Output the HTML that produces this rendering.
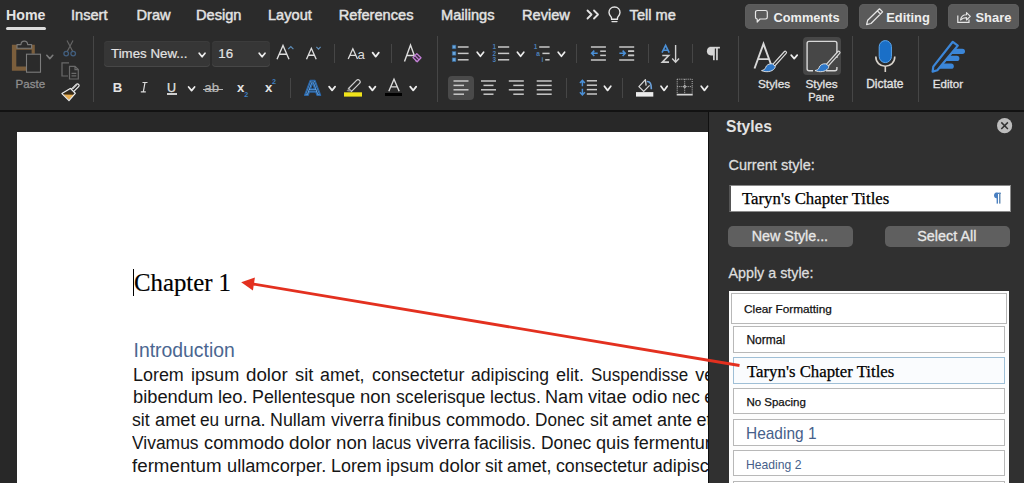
<!DOCTYPE html>
<html><head><meta charset="utf-8"><style>
html,body{margin:0;padding:0;}
body{width:1024px;height:483px;overflow:hidden;position:relative;background:#2b2b2b;font-family:"Liberation Sans",sans-serif;}
.t{position:absolute;white-space:nowrap;line-height:1;}
.r{position:absolute;}
.s{position:absolute;overflow:visible;}
</style></head><body>
<div class="r" style="left:0px;top:0px;width:1024px;height:110px;background:#2b2b2b;"></div>
<div class="r" style="left:0px;top:110px;width:1024px;height:2px;background:#121212;"></div>
<div class="t" style="left:6.00px;top:8.00px;font-size:14.2px;color:#e3e3e3;font-weight:700;font-family:'Liberation Sans', sans-serif;">Home</div>
<div class="t" style="left:71.00px;top:8.00px;font-size:14.6px;color:#e3e3e3;font-weight:400;font-family:'Liberation Sans', sans-serif;-webkit-text-stroke:0.45px #e3e3e3">Insert</div>
<div class="t" style="left:136.50px;top:8.00px;font-size:14.6px;color:#e3e3e3;font-weight:400;font-family:'Liberation Sans', sans-serif;-webkit-text-stroke:0.45px #e3e3e3">Draw</div>
<div class="t" style="left:196.00px;top:8.00px;font-size:14.6px;color:#e3e3e3;font-weight:400;font-family:'Liberation Sans', sans-serif;-webkit-text-stroke:0.45px #e3e3e3">Design</div>
<div class="t" style="left:268.00px;top:8.00px;font-size:14.6px;color:#e3e3e3;font-weight:400;font-family:'Liberation Sans', sans-serif;-webkit-text-stroke:0.45px #e3e3e3">Layout</div>
<div class="t" style="left:338.80px;top:8.00px;font-size:14.6px;color:#e3e3e3;font-weight:400;font-family:'Liberation Sans', sans-serif;-webkit-text-stroke:0.45px #e3e3e3">References</div>
<div class="t" style="left:441.00px;top:8.00px;font-size:14.6px;color:#e3e3e3;font-weight:400;font-family:'Liberation Sans', sans-serif;-webkit-text-stroke:0.45px #e3e3e3">Mailings</div>
<div class="t" style="left:522.00px;top:8.00px;font-size:14.6px;color:#e3e3e3;font-weight:400;font-family:'Liberation Sans', sans-serif;-webkit-text-stroke:0.45px #e3e3e3">Review</div>
<div class="t" style="left:629.60px;top:8.00px;font-size:14.6px;color:#e3e3e3;font-weight:400;font-family:'Liberation Sans', sans-serif;-webkit-text-stroke:0.45px #e3e3e3">Tell me</div>
<div class="r" style="left:6px;top:26.5px;width:40px;height:3.0px;background:#dcdcdc;border-radius:2px"></div>
<div class="r" style="left:745px;top:3.5px;width:103px;height:25.5px;background:#5a5a5a;border-radius:5px;box-shadow:inset 0 0 0 1px #5d5d5d"></div>
<div class="r" style="left:859px;top:3.5px;width:78px;height:25.5px;background:#5a5a5a;border-radius:5px;box-shadow:inset 0 0 0 1px #5d5d5d"></div>
<div class="r" style="left:948px;top:3.5px;width:71px;height:25.5px;background:#5a5a5a;border-radius:5px;box-shadow:inset 0 0 0 1px #5d5d5d"></div>
<div class="t" style="left:773.50px;top:11.80px;font-size:12.8px;color:#eeeeee;font-weight:700;font-family:'Liberation Sans', sans-serif;">Comments</div>
<div class="t" style="left:886.20px;top:11.80px;font-size:12.9px;color:#eeeeee;font-weight:700;font-family:'Liberation Sans', sans-serif;">Editing</div>
<div class="t" style="left:975.50px;top:11.80px;font-size:12.9px;color:#eeeeee;font-weight:700;font-family:'Liberation Sans', sans-serif;">Share</div>
<div class="r" style="left:93px;top:36px;width:1px;height:66px;background:#464646;"></div>
<div class="r" style="left:437px;top:36px;width:1px;height:66px;background:#464646;"></div>
<div class="r" style="left:738px;top:36px;width:1px;height:66px;background:#464646;"></div>
<div class="r" style="left:852px;top:36px;width:1px;height:66px;background:#464646;"></div>
<div class="r" style="left:918px;top:36px;width:1px;height:66px;background:#464646;"></div>
<div class="r" style="left:334px;top:44px;width:1px;height:19px;background:#464646;"></div>
<div class="r" style="left:391px;top:44px;width:1px;height:19px;background:#464646;"></div>
<div class="r" style="left:290px;top:78px;width:1px;height:20px;background:#464646;"></div>
<div class="r" style="left:576px;top:44px;width:1px;height:19px;background:#464646;"></div>
<div class="r" style="left:648px;top:44px;width:1px;height:19px;background:#464646;"></div>
<div class="r" style="left:692px;top:44px;width:1px;height:19px;background:#464646;"></div>
<div class="r" style="left:566px;top:78px;width:1px;height:20px;background:#464646;"></div>
<div class="r" style="left:622px;top:78px;width:1px;height:20px;background:#464646;"></div>
<div class="t" style="left:15.50px;top:78.20px;font-size:11.6px;color:#8e8e8e;font-weight:400;font-family:'Liberation Sans', sans-serif;-webkit-text-stroke:0.3px #8e8e8e">Paste</div>
<div class="r" style="left:104px;top:41px;width:106px;height:26px;background:#363636;border-radius:4px;box-shadow:inset 0 -1px 0 #474747, inset 0 1px 0 #3c3c3c"></div>
<div class="r" style="left:212px;top:41px;width:58px;height:26px;background:#363636;border-radius:4px;box-shadow:inset 0 -1px 0 #474747, inset 0 1px 0 #3c3c3c"></div>
<div class="t" style="left:111.00px;top:47.20px;font-size:13.3px;color:#e3e3e3;font-weight:400;font-family:'Liberation Sans', sans-serif;-webkit-text-stroke:0.2px #e3e3e3">Times New...</div>
<div class="t" style="left:218.30px;top:47.20px;font-size:13.3px;color:#e3e3e3;font-weight:400;font-family:'Liberation Sans', sans-serif;-webkit-text-stroke:0.2px #e3e3e3">16</div>
<div class="t" style="left:357.60px;top:48.10px;font-size:13.2px;color:#dcdcdc;font-weight:400;font-family:'Liberation Sans', sans-serif;">a</div>
<div class="t" style="left:112.80px;top:80.90px;font-size:13.2px;color:#e3e3e3;font-weight:700;font-family:'Liberation Sans', sans-serif;">B</div>
<div class="t" style="left:167.00px;top:81.60px;font-size:12.5px;color:#e3e3e3;font-weight:400;font-family:'Liberation Sans', sans-serif;-webkit-text-stroke:0.25px #e3e3e3">U</div>
<div class="r" style="left:167px;top:93px;width:10px;height:1.5999999999999943px;background:#cfcfcf;"></div>
<div class="t" style="left:204.30px;top:80.90px;font-size:13.2px;color:#b8b8b8;font-weight:400;font-family:'Liberation Sans', sans-serif;-webkit-text-stroke:0.2px #b8b8b8">ab</div>
<div class="r" style="left:202.8px;top:88.6px;width:20.0px;height:1.2000000000000028px;background:#b8b8b8;"></div>
<div class="t" style="left:237.00px;top:80.90px;font-size:13.2px;color:#e3e3e3;font-weight:700;font-family:'Liberation Sans', sans-serif;">x</div>
<div class="t" style="left:244.30px;top:90.80px;font-size:7.2px;color:#3f7fc0;font-weight:700;font-family:'Liberation Sans', sans-serif;">2</div>
<div class="t" style="left:265.00px;top:80.90px;font-size:13.2px;color:#e3e3e3;font-weight:700;font-family:'Liberation Sans', sans-serif;">x</div>
<div class="t" style="left:272.00px;top:77.70px;font-size:7.2px;color:#3f7fc0;font-weight:700;font-family:'Liberation Sans', sans-serif;">2</div>
<div class="r" style="left:385px;top:92.7px;width:17px;height:3.5999999999999943px;background:#000000;"></div>
<div class="t" style="left:492.60px;top:44.40px;font-size:6.4px;color:#4b7fb9;font-weight:700;font-family:'Liberation Sans', sans-serif;">1</div>
<div class="t" style="left:492.60px;top:50.80px;font-size:6.4px;color:#4b7fb9;font-weight:700;font-family:'Liberation Sans', sans-serif;">2</div>
<div class="t" style="left:492.60px;top:57.20px;font-size:6.4px;color:#4b7fb9;font-weight:700;font-family:'Liberation Sans', sans-serif;">3</div>
<div class="t" style="left:533.80px;top:44.40px;font-size:6.4px;color:#4b7fb9;font-weight:700;font-family:'Liberation Sans', sans-serif;">1</div>
<div class="t" style="left:536.30px;top:50.80px;font-size:6.6px;color:#4b7fb9;font-weight:700;font-family:'Liberation Sans', sans-serif;">a</div>
<div class="t" style="left:541.50px;top:57.00px;font-size:6.4px;color:#4b7fb9;font-weight:700;font-family:'Liberation Sans', sans-serif;">i</div>
<div class="r" style="left:448px;top:76px;width:25.5px;height:24.299999999999997px;background:#4a4a4a;border-radius:4px"></div>
<div class="t" style="left:758.00px;top:79.40px;font-size:11.8px;color:#e3e3e3;font-weight:400;font-family:'Liberation Sans', sans-serif;-webkit-text-stroke:0.3px #e3e3e3">Styles</div>
<div class="r" style="left:803px;top:37px;width:38px;height:38px;background:#474747;border-radius:4px"></div>
<div class="t" style="left:805.50px;top:79.40px;font-size:11.8px;color:#e3e3e3;font-weight:400;font-family:'Liberation Sans', sans-serif;-webkit-text-stroke:0.3px #e3e3e3">Styles</div>
<div class="t" style="left:808.20px;top:91.70px;font-size:11.1px;color:#e3e3e3;font-weight:400;font-family:'Liberation Sans', sans-serif;-webkit-text-stroke:0.3px #e3e3e3">Pane</div>
<div class="t" style="left:866.20px;top:78.40px;font-size:12px;color:#e3e3e3;font-weight:400;font-family:'Liberation Sans', sans-serif;-webkit-text-stroke:0.3px #e3e3e3">Dictate</div>
<div class="t" style="left:932.80px;top:78.40px;font-size:11.6px;color:#e3e3e3;font-weight:400;font-family:'Liberation Sans', sans-serif;-webkit-text-stroke:0.3px #e3e3e3">Editor</div>
<svg class="s" style="left:0;top:0;z-index:2" width="1024" height="112" viewBox="0 0 1024 112"><polyline points="587.5,10.5 591.5,14.5 587.5,18.5" fill="none" stroke="#e3e3e3" stroke-width="1.8" stroke-linecap="round" stroke-linejoin="round"/><polyline points="594,10.5 598,14.5 594,18.5" fill="none" stroke="#e3e3e3" stroke-width="1.8" stroke-linecap="round" stroke-linejoin="round"/><path d="M614.5 7 C611 7 609 9.6 609 12.5 C609 14.8 610.3 16 611.4 17.3 L611.6 19.2 L617.4 19.2 L617.6 17.3 C618.7 16 620 14.8 620 12.5 C620 9.6 618 7 614.5 7 Z" fill="none" stroke="#e3e3e3" stroke-width="1.4"/><line x1="612" y1="21.6" x2="617" y2="21.6" stroke="#e3e3e3" stroke-width="1.4" stroke-linecap="round"/><path d="M757.5 10.5 H765.5 Q767.3 10.5 767.3 12.3 V17.3 Q767.3 19 765.5 19 H760 L757.2 22 V19 Q755.5 19 755.5 17.3 V12.3 Q755.5 10.5 757.5 10.5 Z" fill="none" stroke="#e6e6e6" stroke-width="1.2" stroke-linejoin="round"/><path d="M879.5 8.8 L882.6 11.9 L871 23.5 L866.6 24.6 L867.7 20.2 Z M877.4 10.9 L880.5 14" fill="none" stroke="#e6e6e6" stroke-width="1.25" stroke-linejoin="round"/><path d="M957.8 15.5 V22.3 H969 V19.5" fill="none" stroke="#e6e6e6" stroke-width="1.2"/><path d="M960.5 20 C961 16.3 963.5 14.8 966.5 14.8 V12.6 L970.3 16.3 L966.5 20 V17.6 C964.2 17.6 962.2 18.3 960.5 20 Z" fill="none" stroke="#e6e6e6" stroke-width="1.15" stroke-linejoin="round"/><path d="M11.9 44.7 H34.8 V53.7 H31.6 V49.8 H16.3 V66.5 H26 V70.7 H11.9 Z" fill="#7b5e3c"/><path d="M17 48.2 V44.6 H21 C21 42.5 22.5 41.1 24.3 41.1 C26.1 41.1 27.6 42.5 27.6 44.6 H31.6 V48.2 Z" fill="#2b2b2b" stroke="#7a7a7a" stroke-width="1.1" stroke-linejoin="round"/><rect x="26.5" y="54.2" width="14" height="18" fill="#2b2b2b" stroke="#7c7c7c" stroke-width="1.1"/><polyline points="46.8,55.3 49.8,58.6 52.8,55.3" fill="none" stroke="#7a7a7a" stroke-width="1.6" stroke-linecap="round" stroke-linejoin="round"/><path d="M67 40.5 L72.8 51.5 M73 40.5 L67.2 51.5" fill="none" stroke="#646464" stroke-width="1.2"/><circle cx="66.2" cy="53.6" r="2.3" fill="none" stroke="#415e7e" stroke-width="1.3"/><circle cx="73.2" cy="53.6" r="2.3" fill="none" stroke="#415e7e" stroke-width="1.3"/><path d="M69 62.8 H62 V76 H68" fill="none" stroke="#6a6a6a" stroke-width="1.2"/><path d="M69.5 66.3 H75 L78.3 69.6 V79 H69.5 Z M75 66.3 V69.6 H78.3 M71.5 73.3 H76.3 M71.5 75.8 H76.3" fill="none" stroke="#6a6a6a" stroke-width="1.2"/><path d="M63.2 94.2 L74.2 94.6 L69 100.3 Z" fill="#e6ad52"/><path d="M66 92 L72.5 92.3 L74.2 94.6 L63.2 94.2 Z" fill="#3a2a12"/><path d="M61.9 93.6 L70.3 88.4 L75.3 93.3 L69 100.7 Z" fill="none" stroke="#eeeeee" stroke-width="1.2" stroke-linejoin="round"/><path d="M71.2 89.3 L76.2 84.3 C76.9 83.6 77.9 83.6 78.6 84.3 C79.3 85 79.3 86 78.6 86.7 L73.6 91.7" fill="none" stroke="#eeeeee" stroke-width="1.2" stroke-linejoin="round"/><path d="M72.8 89.2 L77.3 84.8" stroke="#eeeeee" stroke-width="0.7"/><polyline points="199.2,53.2 202.1,56.8 205,53.2" fill="none" stroke="#ececec" stroke-width="1.75" stroke-linecap="round" stroke-linejoin="round"/><polyline points="259.2,53.2 262.1,56.8 265,53.2" fill="none" stroke="#ececec" stroke-width="1.75" stroke-linecap="round" stroke-linejoin="round"/><path d="M277,59.2 L283.0,45.4 L289,59.2 M279.16,54.232 H286.84" fill="none" stroke="#dedede" stroke-width="1.35" stroke-linejoin="miter"/><polyline points="288.2,49.2 290.8,46.6 293.4,49.2" fill="none" stroke="#5e8db8" stroke-width="1.2"/><path d="M306.5,59.2 L311.35,48.3 L316.2,59.2 M308.246,55.276 H314.454" fill="none" stroke="#dedede" stroke-width="1.35" stroke-linejoin="miter"/><polyline points="316.4,46.8 318.5,49.1 320.6,46.8" fill="none" stroke="#5e8db8" stroke-width="1.2"/><path d="M348.2,59.1 L352.85,48.8 L357.5,59.1 M349.874,55.392 H355.82599999999996" fill="none" stroke="#dcdcdc" stroke-width="1.3" stroke-linejoin="miter"/><polyline points="372.6,52.6 375.70000000000005,56.6 378.8,52.6" fill="none" stroke="#ececec" stroke-width="1.75" stroke-linecap="round" stroke-linejoin="round"/><path d="M404.5,61.5 L410.5,45 L416.5,61.5 M406.66,55.56 H414.34" fill="none" stroke="#dcdcdc" stroke-width="1.4" stroke-linejoin="miter"/><path d="M416.8 53.6 L421 57.8 L417.2 61.8 L413 57.6 Z" fill="#3a2d40" stroke="#c47fd8" stroke-width="1.3" stroke-linejoin="round"/><path d="M415 55.6 L419.1 59.8" stroke="#c47fd8" stroke-width="1.2"/><path d="M142.5 82.5 H147.5 M140.8 91.9 H145.8 M145 82.5 L143.3 91.9" fill="none" stroke="#dcdcdc" stroke-width="1.2"/><polyline points="188.6,87 191.6,90.6 194.6,87" fill="none" stroke="#ececec" stroke-width="1.75" stroke-linecap="round" stroke-linejoin="round"/><path d="M304.6 95.3 L310.2 80.4 H315 L320.6 95.3 H317 L315.8 92 H309.4 L308.2 95.3 Z M310.4 88.9 H314.8 L312.6 83 Z" fill="#6aa8e4" fill-rule="evenodd" stroke="#2a66a8" stroke-width="1.3" stroke-linejoin="round"/><path d="M306.6 94.2 L311.2 81.8 H314 L318.6 94.2 M309.2 90.6 H316" fill="none" stroke="#173a60" stroke-width="0.9" stroke-linejoin="round"/><polyline points="329.1,86.6 332.1,90.4 335.1,86.6" fill="none" stroke="#ececec" stroke-width="1.75" stroke-linecap="round" stroke-linejoin="round"/><path d="M348.5 88.5 L356.5 80.3 C357.4 79.4 358.6 79.4 359.5 80.3 C360.4 81.2 360.4 82.4 359.5 83.3 L351.5 91.3 Z" fill="none" stroke="#cfcfcf" stroke-width="1.2"/><path d="M348.5 88.5 L346.5 91 L349 91.6 L351.5 91.3 Z" fill="#8a8a8a"/><rect x="344" y="92.3" width="18" height="4.3" fill="#f0e31a"/><polyline points="369.4,86.6 372.4,90.4 375.4,86.6" fill="none" stroke="#ececec" stroke-width="1.75" stroke-linecap="round" stroke-linejoin="round"/><path d="M388.8,91.2 L394.0,79.2 L399.2,91.2 M390.672,86.88 H397.328" fill="none" stroke="#dcdcdc" stroke-width="1.35" stroke-linejoin="miter"/><polyline points="410.2,86.6 413.2,90.4 416.2,86.6" fill="none" stroke="#ececec" stroke-width="1.75" stroke-linecap="round" stroke-linejoin="round"/><rect x="452.2" y="45.1" width="3.7" height="3.7" fill="#69a6dc" stroke="#2f5f90" stroke-width="0.6"/><line x1="457.8" y1="47" x2="468.6" y2="47" stroke="#c9c9c9" stroke-width="1.5"/><rect x="452.2" y="51.5" width="3.7" height="3.7" fill="#69a6dc" stroke="#2f5f90" stroke-width="0.6"/><line x1="457.8" y1="53.4" x2="468.6" y2="53.4" stroke="#c9c9c9" stroke-width="1.5"/><rect x="452.2" y="57.9" width="3.7" height="3.7" fill="#69a6dc" stroke="#2f5f90" stroke-width="0.6"/><line x1="457.8" y1="59.8" x2="468.6" y2="59.8" stroke="#c9c9c9" stroke-width="1.5"/><polyline points="477.2,52.3 480.4,56.2 483.6,52.3" fill="none" stroke="#ececec" stroke-width="1.75" stroke-linecap="round" stroke-linejoin="round"/><line x1="498" y1="47" x2="509.2" y2="47" stroke="#c9c9c9" stroke-width="1.5"/><line x1="498" y1="53.4" x2="509.2" y2="53.4" stroke="#c9c9c9" stroke-width="1.5"/><line x1="498" y1="59.8" x2="509.2" y2="59.8" stroke="#c9c9c9" stroke-width="1.5"/><polyline points="517.4,52.3 520.5999999999999,56.2 523.8,52.3" fill="none" stroke="#ececec" stroke-width="1.75" stroke-linecap="round" stroke-linejoin="round"/><line x1="539.2" y1="47" x2="549.6" y2="47" stroke="#c9c9c9" stroke-width="1.5"/><line x1="542.4" y1="53.4" x2="549.6" y2="53.4" stroke="#c9c9c9" stroke-width="1.5"/><line x1="545.2" y1="59.8" x2="549.6" y2="59.8" stroke="#c9c9c9" stroke-width="1.5"/><polyline points="558.2,52.3 561.4000000000001,56.2 564.6,52.3" fill="none" stroke="#ececec" stroke-width="1.75" stroke-linecap="round" stroke-linejoin="round"/><line x1="590.9" y1="47" x2="605.9" y2="47" stroke="#c9c9c9" stroke-width="1.5"/><line x1="590.9" y1="60" x2="605.9" y2="60" stroke="#c9c9c9" stroke-width="1.5"/><line x1="600.1999999999999" y1="51.2" x2="605.9" y2="51.2" stroke="#c9c9c9" stroke-width="1.5"/><line x1="600.1999999999999" y1="55.4" x2="605.9" y2="55.4" stroke="#c9c9c9" stroke-width="1.5"/><line x1="619.2" y1="47" x2="634.2" y2="47" stroke="#c9c9c9" stroke-width="1.5"/><line x1="619.2" y1="60" x2="634.2" y2="60" stroke="#c9c9c9" stroke-width="1.5"/><line x1="628.5" y1="51.2" x2="634.2" y2="51.2" stroke="#c9c9c9" stroke-width="1.5"/><line x1="628.5" y1="55.4" x2="634.2" y2="55.4" stroke="#c9c9c9" stroke-width="1.5"/><path d="M597.7 53.3 H591.8 M594.3 50.6 L591.6 53.3 L594.3 56" fill="none" stroke="#4a8fd6" stroke-width="1.5"/><path d="M619.4 53.3 H625.2 M622.6 50.6 L625.3 53.3 L622.6 56" fill="none" stroke="#4a8fd6" stroke-width="1.5"/><line x1="628" y1="51.2" x2="633.8" y2="51.2" stroke="#c9c9c9" stroke-width="1.5"/><line x1="628" y1="55.4" x2="633.8" y2="55.4" stroke="#c9c9c9" stroke-width="1.5"/><path d="M662 52.7 L665.6 45.4 L669.2 52.7 M663.3 50.2 H667.9" fill="none" stroke="#4a8fd6" stroke-width="1.6"/><path d="M662.3 55.5 H668.7 L662.3 62.1 H669" fill="none" stroke="#d0d0d0" stroke-width="1.6"/><path d="M675.6 45 V62 M672.2 58.6 L675.6 62.2 L679 58.6" fill="none" stroke="#d0d0d0" stroke-width="1.4"/><path d="M714.4 47.2 H709.8 C707.9 47.2 706.9 49.2 706.9 51.3 C706.9 53.5 708.2 55.4 711 55.4 H714.4 Z" fill="#d6d6d6"/><rect x="709.5" y="46.8" width="10.4" height="1.7" fill="#d6d6d6"/><rect x="713" y="47" width="1.7" height="13.2" fill="#d6d6d6"/><rect x="716.1" y="47" width="1.7" height="13.2" fill="#d6d6d6"/><line x1="453.5" y1="81" x2="468.5" y2="81" stroke="#c9c9c9" stroke-width="1.5"/><line x1="453.5" y1="85.4" x2="464.0" y2="85.4" stroke="#c9c9c9" stroke-width="1.5"/><line x1="453.5" y1="89.8" x2="468.5" y2="89.8" stroke="#c9c9c9" stroke-width="1.5"/><line x1="453.5" y1="94.2" x2="464.0" y2="94.2" stroke="#c9c9c9" stroke-width="1.5"/><line x1="481.0" y1="81" x2="496.0" y2="81" stroke="#c9c9c9" stroke-width="1.5"/><line x1="483.5" y1="85.4" x2="493.5" y2="85.4" stroke="#c9c9c9" stroke-width="1.5"/><line x1="481.0" y1="89.8" x2="496.0" y2="89.8" stroke="#c9c9c9" stroke-width="1.5"/><line x1="483.5" y1="94.2" x2="493.5" y2="94.2" stroke="#c9c9c9" stroke-width="1.5"/><line x1="508.79999999999995" y1="81" x2="523.8" y2="81" stroke="#c9c9c9" stroke-width="1.5"/><line x1="513.3" y1="85.4" x2="523.8" y2="85.4" stroke="#c9c9c9" stroke-width="1.5"/><line x1="508.79999999999995" y1="89.8" x2="523.8" y2="89.8" stroke="#c9c9c9" stroke-width="1.5"/><line x1="513.3" y1="94.2" x2="523.8" y2="94.2" stroke="#c9c9c9" stroke-width="1.5"/><line x1="536.7" y1="81" x2="551.7" y2="81" stroke="#c9c9c9" stroke-width="1.5"/><line x1="536.7" y1="85.4" x2="551.7" y2="85.4" stroke="#c9c9c9" stroke-width="1.5"/><line x1="536.7" y1="89.8" x2="551.7" y2="89.8" stroke="#c9c9c9" stroke-width="1.5"/><line x1="536.7" y1="94.2" x2="551.7" y2="94.2" stroke="#c9c9c9" stroke-width="1.5"/><path d="M582.4 80.5 V86.3 M579.9 83 L582.4 80.4 L584.9 83 M582.4 88.8 V94.8 M579.9 92.3 L582.4 94.9 L584.9 92.3" fill="none" stroke="#4a8fd6" stroke-width="1.5"/><line x1="586.8" y1="80.8" x2="597" y2="80.8" stroke="#c9c9c9" stroke-width="1.5"/><line x1="586.8" y1="85.2" x2="597" y2="85.2" stroke="#c9c9c9" stroke-width="1.5"/><line x1="586.8" y1="89.6" x2="597" y2="89.6" stroke="#c9c9c9" stroke-width="1.5"/><line x1="586.8" y1="94" x2="597" y2="94" stroke="#c9c9c9" stroke-width="1.5"/><polyline points="604.4,86.2 607.5999999999999,90.4 610.8,86.2" fill="none" stroke="#ececec" stroke-width="1.75" stroke-linecap="round" stroke-linejoin="round"/><path d="M646.1 85.6 L645.4 79.6 L638.9 86.6 L643.7 91.4 L649.6 85.4" fill="none" stroke="#d6d6d6" stroke-width="1.3" stroke-linejoin="round"/><path d="M647.5 81.5 C649.5 81.5 651.3 83.5 651.3 88.5" fill="none" stroke="#6a9fd8" stroke-width="1.7" stroke-linecap="round"/><rect x="636" y="92.1" width="17.3" height="4.5" fill="#ececec"/><polyline points="661,86.2 664.1,90.4 667.2,86.2" fill="none" stroke="#ececec" stroke-width="1.75" stroke-linecap="round" stroke-linejoin="round"/><path d="M677.2 79.2 H692.2 V94 M677.2 79.2 V94 M684.7 79.2 V94 M677.2 86.6 H692.2" fill="none" stroke="#bdbdbd" stroke-width="1" stroke-dasharray="1 1.1"/><rect x="676.7" y="93.8" width="16" height="1.7" fill="#d6d6d6"/><circle cx="684.7" cy="86.6" r="1.1" fill="none" stroke="#d6d6d6" stroke-width="0.8"/><polyline points="701.2,86.2 704.4000000000001,90.4 707.6,86.2" fill="none" stroke="#ececec" stroke-width="1.75" stroke-linecap="round" stroke-linejoin="round"/><path d="M754.5,68.5 L763.5,43.8 L772.5,68.5 M757.92,59.114 H769.08" fill="none" stroke="#d8d8d8" stroke-width="1.9" stroke-linejoin="miter"/><line x1="773.3" y1="65.8" x2="785.2" y2="52.6" stroke="#dadada" stroke-width="3.8" stroke-linecap="round"/><line x1="773.6" y1="65.4" x2="785.2" y2="52.6" stroke="#2b2b2b" stroke-width="1.4" stroke-linecap="round"/><path d="M772.4 63.8 C769 63.3 766 65.3 765.5 67.8 C765 69.3 763.5 70.1 761.5 70.6 C766 72.5 772 72 774.6 68.4 C775.3 67.4 775.4 66.3 775 65.9 Z" fill="#2f78c8" stroke="#e6e6e6" stroke-width="0.9" stroke-linejoin="round"/><polyline points="791.2,55.2 794.2,58.6 797.2,55.2" fill="none" stroke="#ececec" stroke-width="1.75" stroke-linecap="round" stroke-linejoin="round"/><path d="M836.9 58 V43.4 Q836.9 41.4 834.9 41.4 H809.1 Q807.1 41.4 807.1 43.4 V68.7 Q807.1 70.7 809.1 70.7 H813 M826 70.7 H834.9 Q836.9 70.7 836.9 68.7 V67" fill="none" stroke="#d8d8d8" stroke-width="1.4"/><line x1="826.8" y1="65.8" x2="838.7" y2="52.6" stroke="#dadada" stroke-width="3.8" stroke-linecap="round"/><line x1="827.1" y1="65.4" x2="838.7" y2="52.6" stroke="#474747" stroke-width="1.4" stroke-linecap="round"/><path d="M825.9 63.8 C822.5 63.3 819.5 65.3 819.0 67.8 C818.5 69.3 817.0 70.1 815.0 70.6 C819.5 72.5 825.5 72 828.1 68.4 C828.8 67.4 828.9 66.3 828.5 65.9 Z" fill="#2f78c8" stroke="#e6e6e6" stroke-width="0.9" stroke-linejoin="round"/><rect x="879.2" y="40.6" width="12.2" height="22" rx="6.1" fill="#1a6fc7" stroke="#5aa6ee" stroke-width="1"/><path d="M875.8 56.5 C875.8 62.5 880 66.3 885.3 66.3 C890.6 66.3 894.8 62.5 894.8 56.5" fill="none" stroke="#d8d2cb" stroke-width="1.6"/><path d="M885.3 66.3 V72" stroke="#d8d2cb" stroke-width="1.6"/><path d="M946 51.3 H963 C964.5 51.3 965 50.5 965 51.3 C965 52.8 964.5 53.8 963 53.8 Z" fill="none"/><rect x="946.5" y="48.7" width="18.5" height="5.2" rx="2.6" fill="#3b86d8"/><rect x="940" y="55.8" width="19.4" height="5.2" rx="2.6" fill="#3b86d8"/><rect x="934.5" y="63.6" width="19.3" height="5.2" rx="2.6" fill="#3b86d8"/><path d="M952.8 41.8 L957.8 45.6 L937.3 70.2 L932.6 71.6 L933.3 66.6 Z" fill="#2b2b2b" stroke="#3b86d8" stroke-width="2.2" stroke-linejoin="round"/></svg>
<div class="r" style="left:0px;top:112px;width:708px;height:371px;background:#282828;"></div>
<div class="r" style="left:17px;top:132px;width:691px;height:351px;background:#ffffff;"></div>
<div class="r" style="left:133px;top:268.5px;width:1.3000000000000114px;height:27.5px;background:#000;"></div>
<div class="t" style="left:133.60px;top:269.50px;font-size:26.2px;color:#000;font-weight:400;font-family:'Liberation Serif', serif;-webkit-text-stroke:0.2px #000;transform:scaleX(0.9459);transform-origin:0 0;">Chapter 1</div>
<div class="t" style="left:133.50px;top:341.00px;font-size:19.4px;color:#4a6690;font-weight:400;font-family:'Liberation Sans', sans-serif;">Introduction</div>
<div class="t" style="left:132.90px;top:365.50px;font-size:18px;color:#161616;font-weight:400;font-family:'Liberation Sans', sans-serif;transform:scaleX(0.995);transform-origin:0 0;">Lorem</div>
<div class="t" style="left:190.70px;top:365.50px;font-size:18px;color:#161616;font-weight:400;font-family:'Liberation Sans', sans-serif;transform:scaleX(1.004);transform-origin:0 0;">ipsum</div>
<div class="t" style="left:245.90px;top:365.50px;font-size:18px;color:#161616;font-weight:400;font-family:'Liberation Sans', sans-serif;transform:scaleX(1.042);transform-origin:0 0;">dolor</div>
<div class="t" style="left:294.60px;top:365.50px;font-size:18px;color:#161616;font-weight:400;font-family:'Liberation Sans', sans-serif;transform:scaleX(1.017);transform-origin:0 0;">sit</div>
<div class="t" style="left:319.90px;top:365.50px;font-size:18px;color:#161616;font-weight:400;font-family:'Liberation Sans', sans-serif;transform:scaleX(0.990);transform-origin:0 0;">amet,</div>
<div class="t" style="left:371.50px;top:365.50px;font-size:18px;color:#161616;font-weight:400;font-family:'Liberation Sans', sans-serif;transform:scaleX(0.993);transform-origin:0 0;">consectetur</div>
<div class="t" style="left:470.90px;top:365.50px;font-size:18px;color:#161616;font-weight:400;font-family:'Liberation Sans', sans-serif;transform:scaleX(0.974);transform-origin:0 0;">adipiscing</div>
<div class="t" style="left:555.90px;top:365.50px;font-size:18px;color:#161616;font-weight:400;font-family:'Liberation Sans', sans-serif;transform:scaleX(1.003);transform-origin:0 0;">elit.</div>
<div class="t" style="left:591.00px;top:365.50px;font-size:18px;color:#161616;font-weight:400;font-family:'Liberation Sans', sans-serif;transform:scaleX(0.943);transform-origin:0 0;">Suspendisse</div>
<div class="t" style="left:695.25px;top:365.50px;font-size:18px;color:#161616;font-weight:400;font-family:'Liberation Sans', sans-serif;">vel</div>
<div class="t" style="left:133.00px;top:388.00px;font-size:18px;color:#161616;font-weight:400;font-family:'Liberation Sans', sans-serif;transform:scaleX(1.016);transform-origin:0 0;">bibendum</div>
<div class="t" style="left:218.00px;top:388.00px;font-size:18px;color:#161616;font-weight:400;font-family:'Liberation Sans', sans-serif;transform:scaleX(1.023);transform-origin:0 0;">leo.</div>
<div class="t" style="left:252.40px;top:388.00px;font-size:18px;color:#161616;font-weight:400;font-family:'Liberation Sans', sans-serif;transform:scaleX(0.991);transform-origin:0 0;">Pellentesque</div>
<div class="t" style="left:360.30px;top:388.00px;font-size:18px;color:#161616;font-weight:400;font-family:'Liberation Sans', sans-serif;transform:scaleX(1.028);transform-origin:0 0;">non</div>
<div class="t" style="left:395.90px;top:388.00px;font-size:18px;color:#161616;font-weight:400;font-family:'Liberation Sans', sans-serif;transform:scaleX(0.981);transform-origin:0 0;">scelerisque</div>
<div class="t" style="left:489.90px;top:388.00px;font-size:18px;color:#161616;font-weight:400;font-family:'Liberation Sans', sans-serif;transform:scaleX(0.976);transform-origin:0 0;">lectus.</div>
<div class="t" style="left:545.40px;top:388.00px;font-size:18px;color:#161616;font-weight:400;font-family:'Liberation Sans', sans-serif;transform:scaleX(1.007);transform-origin:0 0;">Nam</div>
<div class="t" style="left:588.40px;top:388.00px;font-size:18px;color:#161616;font-weight:400;font-family:'Liberation Sans', sans-serif;transform:scaleX(1.015);transform-origin:0 0;">vitae</div>
<div class="t" style="left:631.70px;top:388.00px;font-size:18px;color:#161616;font-weight:400;font-family:'Liberation Sans', sans-serif;transform:scaleX(1.040);transform-origin:0 0;">odio</div>
<div class="t" style="left:671.80px;top:388.00px;font-size:18px;color:#161616;font-weight:400;font-family:'Liberation Sans', sans-serif;transform:scaleX(0.958);transform-origin:0 0;">nec</div>
<div class="t" style="left:704.30px;top:388.00px;font-size:18px;color:#161616;font-weight:400;font-family:'Liberation Sans', sans-serif;">eros</div>
<div class="t" style="left:132.40px;top:411.00px;font-size:18px;color:#161616;font-weight:400;font-family:'Liberation Sans', sans-serif;transform:scaleX(0.983);transform-origin:0 0;">sit</div>
<div class="t" style="left:154.80px;top:411.00px;font-size:18px;color:#161616;font-weight:400;font-family:'Liberation Sans', sans-serif;transform:scaleX(1.014);transform-origin:0 0;">amet</div>
<div class="t" style="left:200.10px;top:411.00px;font-size:18px;color:#161616;font-weight:400;font-family:'Liberation Sans', sans-serif;transform:scaleX(0.959);transform-origin:0 0;">eu</div>
<div class="t" style="left:224.00px;top:411.00px;font-size:18px;color:#161616;font-weight:400;font-family:'Liberation Sans', sans-serif;transform:scaleX(1.016);transform-origin:0 0;">urna.</div>
<div class="t" style="left:270.40px;top:411.00px;font-size:18px;color:#161616;font-weight:400;font-family:'Liberation Sans', sans-serif;transform:scaleX(0.991);transform-origin:0 0;">Nullam</div>
<div class="t" style="left:330.60px;top:411.00px;font-size:18px;color:#161616;font-weight:400;font-family:'Liberation Sans', sans-serif;transform:scaleX(0.983);transform-origin:0 0;">viverra</div>
<div class="t" style="left:388.40px;top:411.00px;font-size:18px;color:#161616;font-weight:400;font-family:'Liberation Sans', sans-serif;transform:scaleX(1.015);transform-origin:0 0;">finibus</div>
<div class="t" style="left:445.90px;top:411.00px;font-size:18px;color:#161616;font-weight:400;font-family:'Liberation Sans', sans-serif;transform:scaleX(1.007);transform-origin:0 0;">commodo.</div>
<div class="t" style="left:535.25px;top:411.00px;font-size:18px;color:#161616;font-weight:400;font-family:'Liberation Sans', sans-serif;transform:scaleX(0.952);transform-origin:0 0;">Donec</div>
<div class="t" style="left:589.50px;top:411.00px;font-size:18px;color:#161616;font-weight:400;font-family:'Liberation Sans', sans-serif;transform:scaleX(0.994);transform-origin:0 0;">sit</div>
<div class="t" style="left:612.10px;top:411.00px;font-size:18px;color:#161616;font-weight:400;font-family:'Liberation Sans', sans-serif;transform:scaleX(0.997);transform-origin:0 0;">amet</div>
<div class="t" style="left:656.70px;top:411.00px;font-size:18px;color:#161616;font-weight:400;font-family:'Liberation Sans', sans-serif;transform:scaleX(1.002);transform-origin:0 0;">ante</div>
<div class="t" style="left:696.50px;top:411.00px;font-size:18px;color:#161616;font-weight:400;font-family:'Liberation Sans', sans-serif;">et</div>
<div class="t" style="left:132.40px;top:434.00px;font-size:18px;color:#161616;font-weight:400;font-family:'Liberation Sans', sans-serif;transform:scaleX(0.969);transform-origin:0 0;">Vivamus</div>
<div class="t" style="left:203.70px;top:434.00px;font-size:18px;color:#161616;font-weight:400;font-family:'Liberation Sans', sans-serif;transform:scaleX(1.016);transform-origin:0 0;">commodo</div>
<div class="t" style="left:288.70px;top:434.00px;font-size:18px;color:#161616;font-weight:400;font-family:'Liberation Sans', sans-serif;transform:scaleX(1.054);transform-origin:0 0;">dolor</div>
<div class="t" style="left:335.60px;top:434.00px;font-size:18px;color:#161616;font-weight:400;font-family:'Liberation Sans', sans-serif;transform:scaleX(1.038);transform-origin:0 0;">non</div>
<div class="t" style="left:371.50px;top:434.00px;font-size:18px;color:#161616;font-weight:400;font-family:'Liberation Sans', sans-serif;transform:scaleX(0.935);transform-origin:0 0;">lacus</div>
<div class="t" style="left:415.50px;top:434.00px;font-size:18px;color:#161616;font-weight:400;font-family:'Liberation Sans', sans-serif;transform:scaleX(0.996);transform-origin:0 0;">viverra</div>
<div class="t" style="left:474.00px;top:434.00px;font-size:18px;color:#161616;font-weight:400;font-family:'Liberation Sans', sans-serif;transform:scaleX(0.984);transform-origin:0 0;">facilisis.</div>
<div class="t" style="left:540.70px;top:434.00px;font-size:18px;color:#161616;font-weight:400;font-family:'Liberation Sans', sans-serif;transform:scaleX(0.967);transform-origin:0 0;">Donec</div>
<div class="t" style="left:595.70px;top:434.00px;font-size:18px;color:#161616;font-weight:400;font-family:'Liberation Sans', sans-serif;transform:scaleX(1.008);transform-origin:0 0;">quis</div>
<div class="t" style="left:633.70px;top:434.00px;font-size:18px;color:#161616;font-weight:400;font-family:'Liberation Sans', sans-serif;">fermentum</div>
<div class="t" style="left:132.40px;top:457.00px;font-size:18px;color:#161616;font-weight:400;font-family:'Liberation Sans', sans-serif;transform:scaleX(1.041);transform-origin:0 0;">fermentum</div>
<div class="t" style="left:226.70px;top:457.00px;font-size:18px;color:#161616;font-weight:400;font-family:'Liberation Sans', sans-serif;transform:scaleX(1.012);transform-origin:0 0;">ullamcorper.</div>
<div class="t" style="left:330.60px;top:457.00px;font-size:18px;color:#161616;font-weight:400;font-family:'Liberation Sans', sans-serif;transform:scaleX(0.994);transform-origin:0 0;">Lorem</div>
<div class="t" style="left:386.00px;top:457.00px;font-size:18px;color:#161616;font-weight:400;font-family:'Liberation Sans', sans-serif;transform:scaleX(1.000);transform-origin:0 0;">ipsum</div>
<div class="t" style="left:438.70px;top:457.00px;font-size:18px;color:#161616;font-weight:400;font-family:'Liberation Sans', sans-serif;transform:scaleX(1.037);transform-origin:0 0;">dolor</div>
<div class="t" style="left:484.90px;top:457.00px;font-size:18px;color:#161616;font-weight:400;font-family:'Liberation Sans', sans-serif;transform:scaleX(0.972);transform-origin:0 0;">sit</div>
<div class="t" style="left:507.10px;top:457.00px;font-size:18px;color:#161616;font-weight:400;font-family:'Liberation Sans', sans-serif;transform:scaleX(0.988);transform-origin:0 0;">amet,</div>
<div class="t" style="left:556.30px;top:457.00px;font-size:18px;color:#161616;font-weight:400;font-family:'Liberation Sans', sans-serif;transform:scaleX(0.986);transform-origin:0 0;">consectetur</div>
<div class="t" style="left:652.75px;top:457.00px;font-size:18px;color:#161616;font-weight:400;font-family:'Liberation Sans', sans-serif;">adipiscing</div>
<div class="r" style="left:708px;top:112px;width:316px;height:371px;background:#303030;border-left:1px solid #101010;box-sizing:border-box;z-index:5"></div>
<div class="t" style="left:726.00px;top:119.00px;font-size:15.6px;color:#e2e2e2;font-weight:700;font-family:'Liberation Sans', sans-serif;z-index:6;">Styles</div>
<svg class="s" style="left:996px;top:117px;z-index:6;" width="18" height="18" viewBox="0 0 18 18"><circle cx="8.6" cy="8.7" r="7.6" fill="#bdbdbd"/><path d="M5.3 5.4 L11.9 12 M11.9 5.4 L5.3 12" stroke="#333" stroke-width="1.5"/></svg>
<div class="t" style="left:728.50px;top:157.50px;font-size:14.5px;color:#dedede;font-weight:400;font-family:'Liberation Sans', sans-serif;z-index:6;-webkit-text-stroke:0.3px #dedede">Current style:</div>
<div class="r" style="left:729px;top:185px;width:282px;height:27px;background:#ffffff;z-index:6;border:1px solid #8a8a8a;border-left:2px solid #555;box-sizing:border-box;"></div>
<div class="t" style="left:742.00px;top:191.30px;font-size:16.8px;color:#000;font-weight:400;font-family:'Liberation Serif', serif;z-index:6;-webkit-text-stroke:0.25px #000">Taryn's Chapter Titles</div>
<svg class="s" style="left:990px;top:190px;z-index:6;" width="14" height="16" viewBox="990 190 14 16"><path d="M997.2 192.8 H996 C994.8 192.8 994 194 994 195.5 C994 197 995 198.2 996.6 198.2 H997.2 Z" fill="#4a80c2"/><rect x="995.5" y="192.7" width="5.3" height="1.3" fill="#4a80c2"/><rect x="996.6" y="192.8" width="1.4" height="10.8" fill="#4a80c2"/><rect x="999" y="192.8" width="1.5" height="10.8" fill="#6a8fb5"/></svg>
<div class="r" style="left:728px;top:226px;width:125px;height:21px;background:#5f5f5f;z-index:6;border-radius:5px;"></div>
<div class="r" style="left:885px;top:226px;width:125px;height:21px;background:#5f5f5f;z-index:6;border-radius:5px;"></div>
<div class="t" style="left:751.80px;top:229.30px;font-size:14.3px;color:#e8e8e8;font-weight:400;font-family:'Liberation Sans', sans-serif;z-index:6;-webkit-text-stroke:0.3px #e8e8e8">New Style...</div>
<div class="t" style="left:917.20px;top:229.30px;font-size:14.4px;color:#e8e8e8;font-weight:400;font-family:'Liberation Sans', sans-serif;z-index:6;-webkit-text-stroke:0.3px #e8e8e8">Select All</div>
<div class="t" style="left:728.50px;top:266.40px;font-size:14.3px;color:#dedede;font-weight:400;font-family:'Liberation Sans', sans-serif;z-index:6;-webkit-text-stroke:0.3px #dedede">Apply a style:</div>
<div class="r" style="left:729px;top:290.5px;width:280px;height:192.5px;background:#fdfdfd;z-index:6;"></div>
<div class="r" style="left:731px;top:293px;width:276px;height:31px;background:#ffffff;z-index:6;border:1px solid #b8b8b8;box-sizing:border-box;"></div>
<div class="t" style="left:744.00px;top:304.30px;font-size:11.8px;color:#111;font-weight:400;font-family:'Liberation Sans', sans-serif;z-index:6;-webkit-text-stroke:0.25px #111">Clear Formatting</div>
<div class="r" style="left:733px;top:326px;width:272px;height:27px;background:#ffffff;z-index:6;border:1px solid #b8b8b8;box-sizing:border-box;"></div>
<div class="t" style="left:746.40px;top:334.20px;font-size:12px;color:#111;font-weight:400;font-family:'Liberation Sans', sans-serif;z-index:6;-webkit-text-stroke:0.25px #111">Normal</div>
<div class="r" style="left:733px;top:357px;width:272px;height:27px;background:#fafcfe;z-index:6;border:1px solid #9fbfd6;box-sizing:border-box;"></div>
<div class="t" style="left:747.00px;top:364.30px;font-size:16.8px;color:#000;font-weight:400;font-family:'Liberation Serif', serif;z-index:6;-webkit-text-stroke:0.25px #000">Taryn's Chapter Titles</div>
<div class="r" style="left:733px;top:388px;width:272px;height:26px;background:#ffffff;z-index:6;border:1px solid #b8b8b8;box-sizing:border-box;"></div>
<div class="t" style="left:746.40px;top:397.30px;font-size:11.5px;color:#111;font-weight:400;font-family:'Liberation Sans', sans-serif;z-index:6;-webkit-text-stroke:0.25px #111">No Spacing</div>
<div class="r" style="left:733px;top:419px;width:272px;height:27px;background:#ffffff;z-index:6;border:1px solid #b8b8b8;box-sizing:border-box;"></div>
<div class="t" style="left:746.40px;top:425.30px;font-size:17.0px;color:#46608a;font-weight:400;font-family:'Liberation Sans', sans-serif;z-index:6;transform:scaleX(0.9095);transform-origin:0 0;">Heading 1</div>
<div class="r" style="left:733px;top:450px;width:272px;height:26px;background:#ffffff;z-index:6;border:1px solid #b8b8b8;box-sizing:border-box;"></div>
<div class="t" style="left:746.40px;top:458.40px;font-size:13.5px;color:#46608a;font-weight:400;font-family:'Liberation Sans', sans-serif;z-index:6;transform:scaleX(0.9015);transform-origin:0 0;">Heading 2</div>
<div class="r" style="left:733px;top:481px;width:272px;height:29px;background:#ffffff;z-index:6;border:1px solid #b8b8b8;box-sizing:border-box;"></div>
<svg class="s" style="left:0;top:0;z-index:8" width="1024" height="483" viewBox="0 0 1024 483"><line x1="252" y1="283.8" x2="739.5" y2="365.5" stroke="#e3301f" stroke-width="2.8" stroke-linecap="butt"/><path d="M241.2 282.3 L254.9 277.6 L252.9 290.5 Z" fill="#e3301f"/></svg>
</body></html>
